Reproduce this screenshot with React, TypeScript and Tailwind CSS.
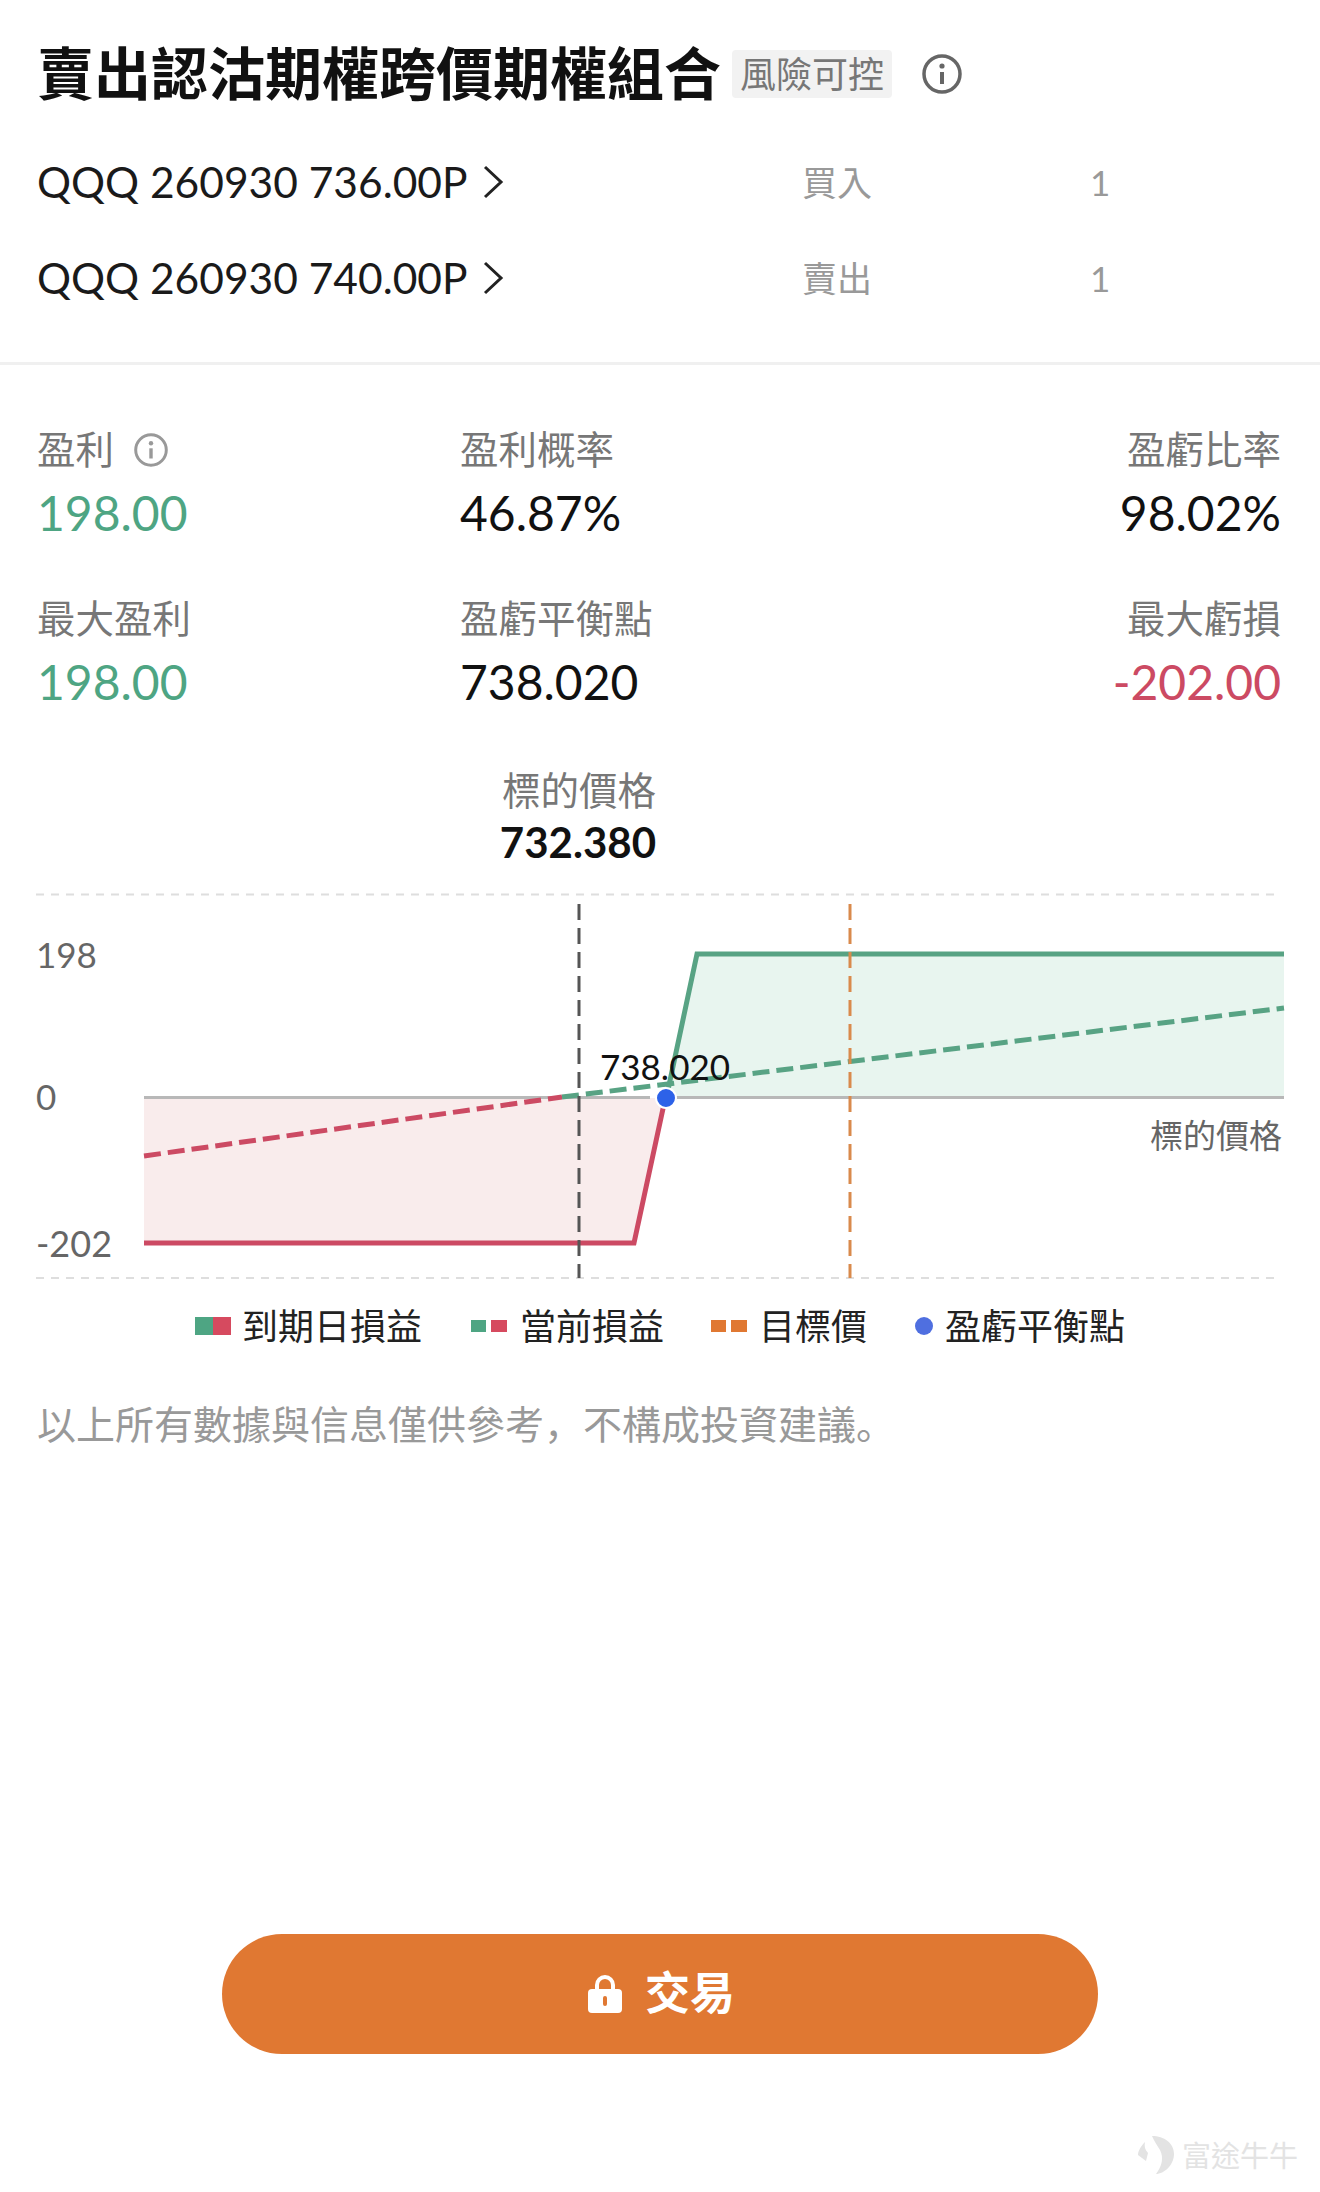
import React from 'react';

const fontStack = "font-['Lato','Noto_Sans_CJK_TC',sans-serif]";

const InfoIcon = ({ className }: { className: string }) => (
  <svg viewBox="0 0 40 40" className={className} fill="none" stroke="currentColor">
    <circle cx="20" cy="20" r="18" strokeWidth="3.5" />
    <circle cx="20" cy="12" r="2.6" fill="currentColor" stroke="none" />
    <path d="M20 18v12" strokeWidth="4" />
  </svg>
);

const Chevron = () => (
  <svg viewBox="0 0 22 34" className="w-[22px] h-[34px] ml-[14px]" fill="none" stroke="#222" strokeWidth="3">
    <path d="M3 2l16 15L3 32" />
  </svg>
);

const legRow = (name: string, side: string, qty: string) => (
  <div className="flex items-center h-[96px]">
    <div className="w-[765px] flex items-center text-[42.5px] text-[#1a1a1a]">
      {name}
      <Chevron />
    </div>
    <div className="w-[288px] text-[35px] text-[#999]">{side}</div>
    <div className="text-[35px] text-[#999]">{qty}</div>
  </div>
);

const Metric = ({ label, value, color, right, info }: { label: string; value: string; color: string; right?: boolean; info?: boolean }) => (
  <div className={right ? 'text-right' : ''}>
    <div className={`h-[54px] flex items-center text-[38.5px] text-[#777] ${right ? 'justify-end' : ''}`}>
      {label}
      {info && <InfoIcon className="w-[34px] h-[34px] ml-[20px] text-[#999]" />}
    </div>
    <div className={`h-[72px] leading-[72px] text-[48px] ${color}`}>{value}</div>
  </div>
);

const PayoffChart = () => (
  <svg viewBox="0 880 1320 410" className="w-[1320px] h-[410px] mt-[12px]">
    <path d="M36 894.5H1281M36 1278H1281" stroke="#dedede" strokeWidth="2" strokeDasharray="8 7" />
    <path d="M144 1098H666L634 1243H144Z" fill="#f9ecec" />
    <path d="M666 1098L697 954H1284V1098Z" fill="#e8f5ef" />
    <path d="M144 1097.5H650M676 1097.5H1284" stroke="#b8b8b8" strokeWidth="3" />
    <path d="M144 1243H634L664 1104" fill="none" stroke="#cc4a63" strokeWidth="5" />
    <path d="M668 1090L697 954H1284" fill="none" stroke="#58a384" strokeWidth="5" />
    <path d="M144 1156L562 1097" fill="none" stroke="#cc4a63" strokeWidth="5" strokeDasharray="17 7" />
    <path d="M562 1097L1284 1008" fill="none" stroke="#58a384" strokeWidth="5" strokeDasharray="17 7" />
    <path d="M579 904V1278" stroke="#555" strokeWidth="3" strokeDasharray="16 8" />
    <path d="M850 904V1278" stroke="#d98a4c" strokeWidth="3" strokeDasharray="16 8" />
    <circle cx="666" cy="1098" r="10" fill="#2d62e8" stroke="#fff" strokeWidth="2" />
    <g fontFamily="Lato, 'Noto Sans CJK TC', sans-serif" fontSize="35" fill="#666">
      <text x="36" y="968">198</text>
      <text x="36" y="1110">0</text>
      <text x="36" y="1257" fontSize="36">-202</text>
      <text x="1282" y="1148" textAnchor="end" fontSize="33">標的價格</text>
      <text x="665" y="1080" textAnchor="middle" fill="#111">738.020</text>
    </g>
  </svg>
);

const Swatch = ({ left, right, solid }: { left: string; right: string; solid?: boolean }) => (
  <div className={`flex items-center w-[36px] ${solid ? '' : 'gap-[5px]'}`}>
    <div className={`${solid ? 'w-[18px] h-[18px]' : 'w-[15px] h-[12px]'} ${left}`} />
    <div className={`${solid ? 'w-[18px] h-[18px]' : 'w-[16px] h-[12px]'} ${right}`} />
  </div>
);

const LockIcon = () => (
  <svg viewBox="0 0 34 38" className="w-[34px] h-[38px]" fill="none">
    <path d="M9 16V10a8 8 0 0116 0v6" stroke="#fff" strokeWidth="4" />
    <rect x="0" y="14" width="34" height="24" rx="4" fill="#fff" />
    <rect x="15" y="21" width="4" height="10" rx="2" fill="#e07832" />
  </svg>
);

export default function App() {
  return (
    <div className={`relative w-[1320px] h-[2192px] bg-white flex flex-col ${fontStack}`}>
      <div className="px-[37px] pt-[44px]">
        <div className="flex items-center h-[60px]">
          <h1 className="text-[57px] font-bold text-[#111] whitespace-nowrap">賣出認沽期權跨價期權組合</h1>
          <span className="ml-[11px] h-[48px] w-[160px] flex items-center justify-center bg-[#f2f2f2] rounded-[4px] text-[36px] text-[#777] whitespace-nowrap">風險可控</span>
          <InfoIcon className="ml-[30px] w-[40px] h-[40px] text-[#666]" />
        </div>
        <div className="mt-[30px]">
          {legRow('QQQ 260930 736.00P', '買入', '1')}
          {legRow('QQQ 260930 740.00P', '賣出', '1')}
        </div>
      </div>
      <div className="mt-[36px] h-[3px] bg-[#f0f0f0]" />

      <div className="mt-[58px] pl-[37px] w-[1281px] grid grid-cols-[423px_1fr_auto] gap-y-[43px]">
        <Metric label="盈利" value="198.00" color="text-[#4ea583]" info />
        <Metric label="盈利概率" value="46.87%" color="text-[#111]" />
        <Metric label="盈虧比率" value="98.02%" color="text-[#111]" right />
        <Metric label="最大盈利" value="198.00" color="text-[#4ea583]" />
        <Metric label="盈虧平衡點" value="738.020" color="text-[#111]" />
        <Metric label="最大虧損" value="-202.00" color="text-[#cc4a63]" right />
      </div>

      <div className="mt-[45px] w-[656px] text-right">
        <div className="h-[54px] leading-[54px] text-[38.5px] text-[#777]">標的價格</div>
        <div className="h-[52px] leading-[52px] text-[42px] font-bold text-[#111] -mt-[1px]">732.380</div>
      </div>

      <PayoffChart />

      <div className="mt-[9px] h-[54px] pl-[195px] flex items-center text-[36px] text-[#222]">
        <Swatch left="bg-[#4ea583]" right="bg-[#d64a5f]" solid />
        <span className="ml-[11px] w-[229px]">到期日損益</span>
        <Swatch left="bg-[#4ea583]" right="bg-[#d64a5f]" />
        <span className="ml-[13px] w-[191px]">當前損益</span>
        <Swatch left="bg-[#e07832]" right="bg-[#e07832]" />
        <span className="ml-[12px] w-[156px]">目標價</span>
        <div className="w-[18px] h-[18px] rounded-full bg-[#4f6fe0]" />
        <span className="ml-[12px]">盈虧平衡點</span>
      </div>

      <p className="mt-[42px] px-[37px] h-[54px] leading-[54px] text-[39px] text-[#999] whitespace-nowrap">
        以上所有數據與信息僅供參考<span className="font-['Noto_Sans_CJK_SC',sans-serif]">，</span>不構成投資建議<span className="font-['Noto_Sans_CJK_SC',sans-serif]">。</span>
      </p>

      <button className="mt-[485px] mx-auto w-[876px] h-[120px] rounded-[60px] bg-[#e07832] flex items-center justify-center gap-[23px] pl-[3px]">
        <LockIcon />
        <span className="text-[45px] font-bold text-white">交易</span>
      </button>

      {/* watermark sits on top of the page corner */}
      <div className="absolute right-[22px] bottom-[15px] flex items-center gap-[8px] text-[29px] text-[#e3e3e3]">
        <svg viewBox="0 0 36 38" className="w-[36px] h-[38px]" fill="#e3e3e3">
          <path d="M14 0c12 0 22 7 22 18S26 38 18 38c6-8 8-16 4-24-3-5-6-9-8-14zM7 6c-4 4-7 9-7 13l8 6 2-8c-3-3-4-7-3-11z" />
        </svg>
        <span>富途牛牛</span>
      </div>
    </div>
  );
}
